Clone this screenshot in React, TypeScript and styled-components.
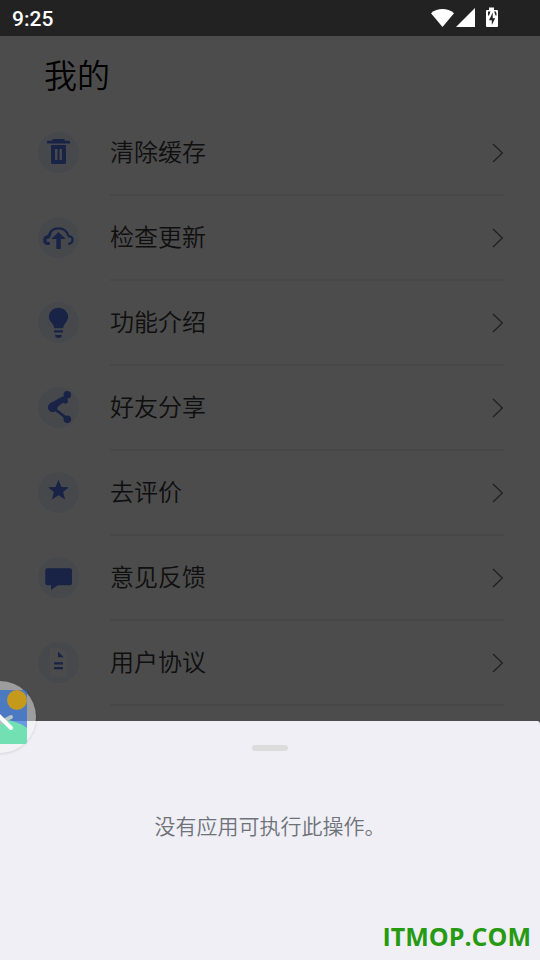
import React from 'react';
import styled, { createGlobalStyle } from 'styled-components';

const GlobalStyle = createGlobalStyle`
  * { box-sizing: border-box; }
  body {
    margin: 0;
    background: #ffffff;
    font-family: Roboto, "Noto Sans CJK SC", sans-serif;
  }
`;

const Screen = styled.div`
  height: 100vh;
  display: flex;
  flex-direction: column;
  overflow: hidden;
`;

const StatusBar = styled.header`
  position: relative;
  z-index: 2;
  flex: none;
  height: 36px;
  padding: 0 42px 0 12px;
  display: flex;
  align-items: center;
  justify-content: space-between;
  background: #222222;
  color: #ffffff;
`;

const Clock = styled.time`
  padding-top: 2px;
  font: 500 21px/36px Roboto, sans-serif;
`;

const StatusIcons = styled.div`
  display: flex;
  align-items: center;
  svg { display: block; }
`;

const Content = styled.main`
  flex: 1;
  min-height: 0;
  overflow: hidden;
`;

const Title = styled.h1`
  margin: 0;
  padding: 14px 44px 13px;
  font: 350 33px/48px "Noto Sans CJK SC", sans-serif;
  color: #000000;
`;

const Menu = styled.ul`
  margin: 0;
  padding: 0 36px 0 38px;
  list-style: none;
`;

const MenuItem = styled.li`
  display: flex;
`;

const MenuButton = styled.button`
  flex: 1;
  height: 85px;
  padding: 0;
  border: 0;
  background: none;
  display: grid;
  grid-template-columns: 72px 1fr;
  align-items: stretch;
  text-align: left;
  cursor: pointer;
`;

const IconCell = styled.span`
  display: flex;
  align-items: center;
  padding-bottom: 2px;
`;

const LabelCell = styled.span`
  display: flex;
  align-items: center;
  justify-content: space-between;
  border-bottom: 2px solid #efefef;
`;

const Label = styled.span`
  padding-bottom: 4px;
  font: 350 24px/36px "Noto Sans CJK SC", sans-serif;
  color: #333333;
`;

const Scrim = styled.div`
  position: fixed;
  inset: 0;
  z-index: 1;
  background: rgba(0, 0, 0, 0.7);
`;

const Sheet = styled.section`
  position: fixed;
  left: 0;
  right: 0;
  bottom: 0;
  z-index: 3;
  min-height: 239px;
  padding: 24px 24px 0;
  display: flex;
  flex-direction: column;
  align-items: center;
  gap: 58px;
  border-radius: 3px 3px 0 0;
  background: #f0eff5;
`;

const Handle = styled.span`
  width: 36px;
  height: 6px;
  border-radius: 3px;
  background: #dcdcdc;
`;

const Message = styled.p`
  margin: 0;
  font: 350 21px/32px "Noto Sans CJK SC", sans-serif;
  color: #6e7279;
`;

const Watermark = styled.span`
  position: absolute;
  right: 9px;
  bottom: 7px;
  font: 700 25px/34px "Open Sans", sans-serif;
  color: #269a12;
`;

const Bubble = styled.button`
  position: fixed;
  left: -36px;
  bottom: 207px;
  z-index: 4;
  width: 72px;
  height: 72px;
  padding: 0;
  border: 0;
  border-radius: 50%;
  background: rgba(246, 246, 246, 0.48);
  box-shadow: 0 1px 3px rgba(0, 0, 0, 0.12);
  cursor: pointer;
  svg { display: block; }
`;

const INK = '#5076e6';

const icons = {
  trash: (
    <g fill={INK}>
      <path d="M14.5 7h12v1.7H31q1 0 1 1.2v1.6H9V9.9q0-1.2 1-1.2h4.5z" />
      <path fillRule="evenodd" d="M13 13h15v17.5q0 1.5-1.5 1.5h-12q-1.5 0-1.5-1.5zM17 17v11h2.5V17zM21.5 17v11H24V17z" />
    </g>
  ),
  cloud: (
    <g>
      <path d="M12 26.4h-2.2C5.4 26 5.2 19.6 10.6 19.2 12 13.5 15.5 11.3 20.5 11.3S29 13.5 30.6 19.2c5.4.4 5.4 7.2-.4 7.6" fill="none" stroke={INK} strokeWidth="2.2" />
      <path d="M6 20l4-2 2-3.5 1.8 2-2 4.5-3.6 1.5L9 25h2.5v3H8.5q-3-1-3.2-4z" fill={INK} />
      <path d="M20.5 15l7.3 7h-5v10h-4.5V22h-5z" fill={INK} />
    </g>
  ),
  bulb: (
    <g fill={INK}>
      <path d="M20.5 5.7c5.5 0 9.7 4.2 9.7 9.4 0 4.5-4.7 6.4-4.9 11.2h-9.1c-.2-4.8-5.4-6.7-5.4-11.2 0-5.2 4.2-9.4 9.7-9.4z" />
      <path d="M16 28.3h9v2.2h-9zM17 33h7q0 3-3.5 3T17 33z" />
    </g>
  ),
  share: (
    <g fill={INK}>
      <circle cx="29.3" cy="7.7" r="3.8" />
      <circle cx="29.3" cy="32.3" r="3.8" />
      <circle cx="14.7" cy="20.4" r="4.8" />
      <path d="M11.8 16.6L24 9.8l5-1 1 7-3 1-2-1-7.5 5.6z" />
      <path d="M15 20.5l14 11.2" stroke={INK} strokeWidth="2.8" />
    </g>
  ),
  star: <path fill={INK} d="M20.5 7.7l2.9 7.2 7.5.3-5.8 4.7 2 7.5-6.6-4.2-6.6 4.2 2-7.5-5.8-4.7 7.5-.3z" />,
  comment: <path fill={INK} d="M9.3 11.3H32q2 0 2 2v13q0 2-2 2H19.8L13 33v-4.7H9.3q-2 0-2-2v-13q0-2 2-2z" />,
  document: (
    <g>
      <path d="M12 6.5h11l6 7v21H12z" fill="#fbfbff" />
      <path d="M20 9.5l5.7 5.8H20zM16 20.2h9v2.3h-9zM16 25h9v2.3h-9z" fill={INK} />
    </g>
  ),
};

type IconName = keyof typeof icons;

const items: { icon: IconName; label: string }[] = [
  { icon: 'trash', label: '清除缓存' },
  { icon: 'cloud', label: '检查更新' },
  { icon: 'bulb', label: '功能介绍' },
  { icon: 'share', label: '好友分享' },
  { icon: 'star', label: '去评价' },
  { icon: 'comment', label: '意见反馈' },
  { icon: 'document', label: '用户协议' },
];

const MenuIcon = ({ name }: { name: IconName }) => (
  <svg width="41" height="41" viewBox="0 0 41 41" aria-hidden="true">
    <circle cx="20.5" cy="20.5" r="20.5" fill="#eef2ff" />
    {icons[name]}
  </svg>
);

const Chevron = () => (
  <svg width="12" height="20" viewBox="0 0 12 20" aria-hidden="true">
    <path d="M1 1l9.3 9L1 19" fill="none" stroke="#707070" strokeWidth="1.4" />
  </svg>
);

const App = () => (
  <>
    <GlobalStyle />
    <Screen>
      <StatusBar>
        <Clock>9:25</Clock>
        <StatusIcons>
          <svg width="67" height="22" viewBox="0 0 67 22" fill="#ffffff" aria-hidden="true">
            <path d="M0 6.3C6.5.7 16.5.7 23 6.3L11.5 20z" />
            <path d="M25 20L44 1v19z" />
            <path d="M58 .5h5V3h3q1 0 1 1v15q0 1-1 1H56q-1 0-1-1V4q0-1 1-1h2z" />
            <path d="M57 4.5h2.5l-1.5 4h-1zM63.2 4.5h1.6l.7 2v2h-1zM61.7 5.5v5.7h2.5L60.8 18v-4.7H58z" fill="#222222" />
          </svg>
        </StatusIcons>
      </StatusBar>
      <Content>
        <Title>我的</Title>
        <Menu>
          {items.map(({ icon, label }) => (
            <MenuItem key={label}>
              <MenuButton type="button">
                <IconCell><MenuIcon name={icon} /></IconCell>
                <LabelCell>
                  <Label>{label}</Label>
                  <Chevron />
                </LabelCell>
              </MenuButton>
            </MenuItem>
          ))}
        </Menu>
      </Content>
    </Screen>
    <Scrim />
    <Sheet role="dialog" aria-label="没有应用可执行此操作。">
      <Handle />
      <Message>没有应用可执行此操作。</Message>
      <Watermark>ITMOP.COM</Watermark>
    </Sheet>
    <Bubble type="button" aria-label="截图">
      <svg width="72" height="72" viewBox="0 0 72 72" aria-hidden="true">
        <defs>
          <clipPath id="tile"><rect x="9" y="9" width="54" height="54" rx="3" /></clipPath>
        </defs>
        <g clipPath="url(#tile)">
          <rect x="9" y="9" width="54" height="54" fill="#2268d8" opacity="0.66" />
          <path d="M9 46C22 37 46 35 63 47v16H9z" fill="#74eaac" opacity="0.88" />
        </g>
        <circle cx="53" cy="19" r="10" fill="#c59a1c" />
        <path d="M24 48l23-12" stroke="#b4c4c4" strokeWidth="4" strokeLinecap="round" />
        <path d="M28 28l19 19" stroke="#ffffff" strokeWidth="4" strokeLinecap="round" />
      </svg>
    </Bubble>
  </>
);

export default App;
